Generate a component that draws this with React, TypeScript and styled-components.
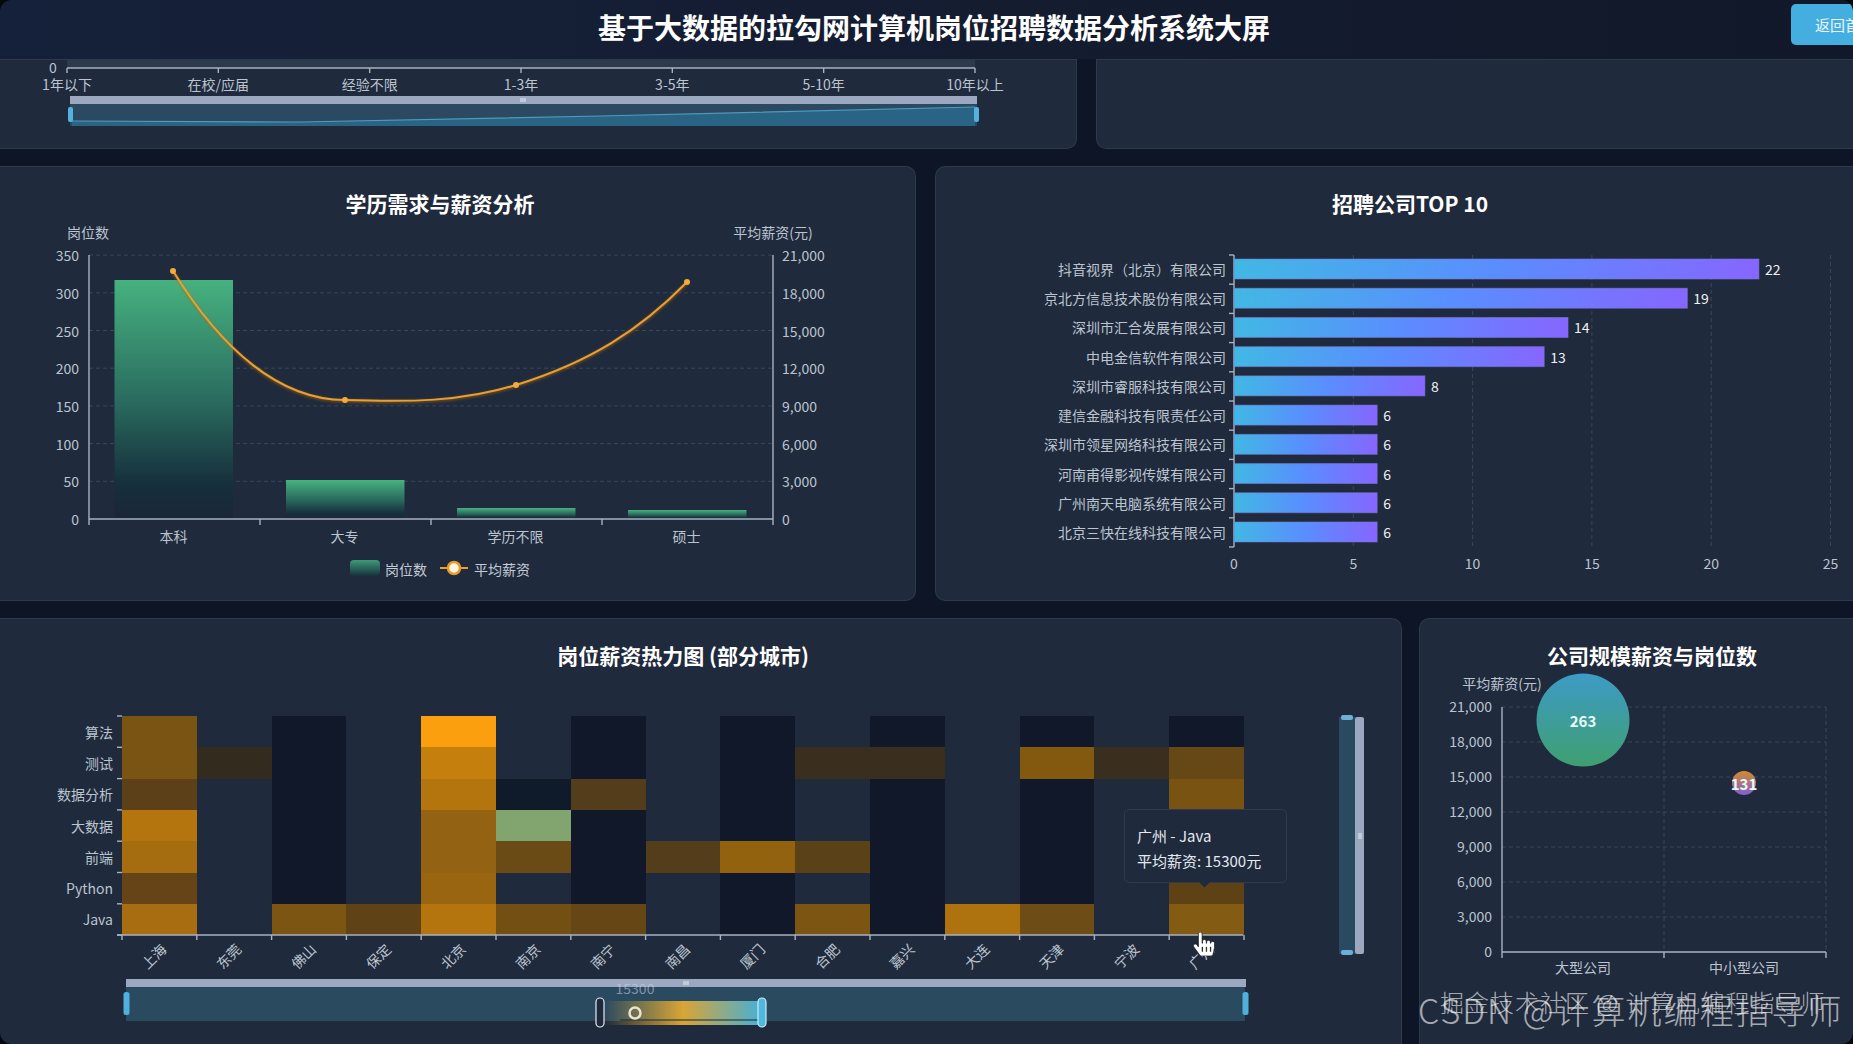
import React from "react";
import styled, {createGlobalStyle} from "styled-components";
import {FaHandPointer} from "react-icons/fa";

const FONT = `"Noto Sans CJK SC", "Noto Sans", "Liberation Sans", sans-serif`;

const GlobalStyle = createGlobalStyle`
    html, body {
        margin: 0;
        height: 100%;
        overflow: hidden;
        background: #05080f;
    }
    #root {
        height: 100%;
    }
`;

const Screen = styled.div`
    position: relative;
    width: 1853px;
    height: 1044px;
    overflow: hidden;
    border-radius: 12px;
    background: #0d1526;
    font-family: ${FONT};
`;

const Header = styled.header`
    display: flex;
    align-items: flex-start;
    height: 59px;
    padding-left: 77px;
    box-sizing: border-box;
    background: linear-gradient(90deg, #15213a 0%, #141c30 55%, #111829 100%);
`;

const HeaderTitle = styled.h1`
    flex: 1;
    margin: 0;
    text-align: center;
    color: #fff;
    font-size: 28px;
    font-weight: 700;
    line-height: 54px;
`;

const BackButton = styled.button`
    flex-shrink: 0;
    width: 102px;
    height: 41px;
    margin: 4px -40px 0 0;
    padding: 0 0 0 24px;
    border: none;
    border-radius: 5px;
    text-align: left;
    background: #44aee0;
    color: #eaf6fc;
    font-family: ${FONT};
    font-size: 15px;
`;

const Row = styled.div<{ $columns: string; $gap: number }>`
    display: grid;
    grid-template-columns: ${props => props.$columns};
    gap: ${props => props.$gap}px;
    width: 1921px;
    margin: 0 0 17px -36px;
`;

const Panel = styled.section`
    position: relative;
    box-sizing: border-box;
    padding-top: 24px;
    border-radius: 10px;
    background: #1f2a3c;
    box-shadow: inset 0 0 0 1px rgba(255, 255, 255, 0.07);
`;

const ScrolledPanel = styled(Panel)`
    height: 90px;
    padding-top: 0;
    border-radius: 0 0 10px 10px;
`;

const BottomPanel = styled(Panel)`
    height: 440px;
`;

const PanelTitle = styled.h2`
    margin: 0;
    text-align: center;
    color: #fff;
    font-size: 21px;
    font-weight: 700;
    line-height: 26px;
`;

const Canvas = styled.svg`
    display: block;
`;

const Label = styled.text`
    fill: #bcc4d0;
    font-family: ${FONT};
    font-size: 14px;
    dominant-baseline: central;
`;

const ValueLabel = styled(Label)`
    fill: #eef1f5;
`;

const BubbleLabel = styled(Label)`
    fill: #eafaf6;
    font-size: 15px;
    font-weight: 700;
`;

const LegendLabel = styled(Label)`
    fill: #c4cbd6;
`;

const RangeValue = styled(Label)`
    fill: rgba(205, 212, 224, 0.55);
`;

const AxisLine = styled.line`
    stroke: #a9b2c2;
    stroke-width: 1.4;
`;

const GridLine = styled.line`
    stroke: #3a4759;
    stroke-width: 1;
    stroke-dasharray: 4 3;
`;

const Tooltip = styled.div`
    position: absolute;
    left: 1160px;
    top: 191px;
    box-sizing: border-box;
    width: 163px;
    height: 74px;
    padding: 13px 0 0 12px;
    border: 1px solid #2e3a4d;
    border-radius: 5px;
    background: #1f2a3c;
    color: #e6eaf0;
    font-size: 15px;
    line-height: 25px;
    white-space: nowrap;

    &::after {
        content: "";
        position: absolute;
        left: 76px;
        bottom: -4px;
        width: 7px;
        height: 7px;
        background: #1f2a3c;
        transform: rotate(45deg);
    }
`;

const Pointer = styled.span`
    position: absolute;
    left: 1228px;
    top: 314px;
    color: #fff;
    line-height: 0;

    svg {
        stroke: #1a1a1a;
        stroke-width: 16px;
    }
`;

const Watermark = styled.div<{ $size: number; $left: number; $top: number; $spacing: number }>`
    position: absolute;
    left: ${props => props.$left}px;
    top: ${props => props.$top}px;
    color: rgba(255, 255, 255, 0.62);
    font-size: ${props => props.$size}px;
    font-weight: 300;
    letter-spacing: ${props => props.$spacing}px;
    line-height: 1;
    white-space: nowrap;
`;

const experienceLabels = ["1年以下", "在校/应届", "经验不限", "1-3年", "3-5年", "5-10年", "10年以上"];

const ExperienceChart = () => (
    <Canvas width={1113} height={90} viewBox="-36 59 1113 90">
        <rect x={67} y={59} width={908} height={9} fill="#2d3a4c"/>
        <Label x={53} y={67} textAnchor="middle">0</Label>
        <AxisLine x1={67} x2={975} y1={68} y2={68}/>
        {experienceLabels.map((label, i) => {
            const x = 67 + i * 151.33;
            return <g key={label}>
                <AxisLine x1={x} x2={x} y1={68} y2={73}/>
                <Label x={x} y={84} textAnchor="middle">{label}</Label>
            </g>;
        })}
        <rect x={70} y={96} width={907} height={8} fill="#9ca8c0"/>
        <rect x={70} y={104} width={907} height={22} fill="#2b4a62"/>
        <path d="M72,121 L300,122 L600,116 L975,107 L975,126 L72,126 Z" fill="#2a6485"/>
        <path d="M72,121 L300,122 L600,116 L975,107" fill="none" stroke="#4e9bbd" strokeWidth={1.2}/>
        <path d="M521,98 V102 M523,98 V102 M525,98 V102" stroke="#e8ecf2" strokeWidth={1}/>
        <rect x={68} y={107} width={5} height={15} rx={2} fill="#55b2de"/>
        <rect x={974} y={107} width={5} height={15} rx={2} fill="#55b2de"/>
    </Canvas>
);

const educationBars = [
    {label: "本科", x: 114.5, top: 280},
    {label: "大专", x: 286, top: 480},
    {label: "学历不限", x: 457, top: 508},
    {label: "硕士", x: 628, top: 510},
];

const EducationChart = () => (
    <Canvas width={952} height={385} viewBox="-36 216 952 385">
        <defs>
            <linearGradient id="eduBar" x1="0" y1="0" x2="0" y2="1">
                <stop offset="0%" stopColor="#46b27f"/>
                <stop offset="50%" stopColor="#2a6c5f"/>
                <stop offset="85%" stopColor="#16303c"/>
                <stop offset="100%" stopColor="#1a2539"/>
            </linearGradient>
            <linearGradient id="eduSwatch" x1="0" y1="0" x2="0" y2="1">
                <stop offset="0%" stopColor="#3e9a78"/>
                <stop offset="100%" stopColor="#17313d"/>
            </linearGradient>
            <filter id="lineGlow" x="-5%" y="-5%" width="110%" height="110%">
                <feDropShadow dx="0" dy="1" stdDeviation="1.5" floodColor="#b5660f" floodOpacity="0.8"/>
            </filter>
        </defs>
        <Label x={88} y={232} textAnchor="middle">岗位数</Label>
        <Label x={773} y={232} textAnchor="middle">平均薪资(元)</Label>
        {[0, 1, 2, 3, 4, 5, 6, 7].map(i => {
            const y = 519 - i * 37.7;
            return <g key={i}>
                {i > 0 && <GridLine x1={89} x2={773} y1={y} y2={y}/>}
                <Label x={79} y={y} textAnchor="end">{i * 50}</Label>
                <Label x={782} y={y}>{(i * 3000).toLocaleString("en-US")}</Label>
            </g>;
        })}
        {educationBars.map(bar => (
            <rect key={bar.label} x={bar.x} y={bar.top} width={118.5} height={519 - bar.top} fill="url(#eduBar)"/>
        ))}
        <AxisLine x1={89} x2={89} y1={255} y2={525}/>
        <AxisLine x1={773} x2={773} y1={255} y2={525}/>
        <AxisLine x1={89} x2={773} y1={519} y2={519}/>
        {[260, 431, 602].map(x => <AxisLine key={x} x1={x} x2={x} y1={519} y2={525}/>)}
        {educationBars.map((bar, i) => (
            <Label key={bar.label} x={173.5 + i * 171} y={536} textAnchor="middle">{bar.label}</Label>
        ))}
        <path
            d="M173,271 C222,350 280,400 345,400 C410,402 460,402 516,385 C590,362 640,330 687,282"
            fill="none" stroke="#e8a030" strokeWidth={2} filter="url(#lineGlow)"/>
        {[[173, 271], [345, 400], [516, 385], [687, 282]].map(([x, y]) => (
            <circle key={x} cx={x} cy={y} r={3} fill="#f3ab3c"/>
        ))}
        <rect x={350} y={560} width={30} height={16} rx={4} fill="url(#eduSwatch)"/>
        <LegendLabel x={385} y={569}>岗位数</LegendLabel>
        <line x1={440} x2={468} y1={568} y2={568} stroke="#e8a030" strokeWidth={2}/>
        <circle cx={454} cy={568} r={6} fill="#fff6df" stroke="#ec9a2a" strokeWidth={2.5}/>
        <LegendLabel x={474} y={569}>平均薪资</LegendLabel>
    </Canvas>
);

const companies = [
    {name: "抖音视界（北京）有限公司", count: 22},
    {name: "京北方信息技术股份有限公司", count: 19},
    {name: "深圳市汇合发展有限公司", count: 14},
    {name: "中电金信软件有限公司", count: 13},
    {name: "深圳市睿服科技有限公司", count: 8},
    {name: "建信金融科技有限责任公司", count: 6},
    {name: "深圳市领星网络科技有限公司", count: 6},
    {name: "河南甫得影视传媒有限公司", count: 6},
    {name: "广州南天电脑系统有限公司", count: 6},
    {name: "北京三快在线科技有限公司", count: 6},
];

const CompanyChart = () => (
    <Canvas width={950} height={385} viewBox="935 216 950 385">
        <defs>
            <linearGradient id="companyBar" x1="0" y1="0" x2="1" y2="0">
                <stop offset="0%" stopColor="#41b8e4"/>
                <stop offset="50%" stopColor="#5a8dff"/>
                <stop offset="100%" stopColor="#8666ff"/>
            </linearGradient>
        </defs>
        {[0, 5, 10, 15, 20, 25].map(value => {
            const x = 1234 + value * 23.86;
            return <g key={value}>
                {value > 0 && <GridLine x1={x} x2={x} y1={255} y2={547}/>}
                <Label x={x} y={563} textAnchor="middle">{value}</Label>
            </g>;
        })}
        <AxisLine x1={1234} x2={1234} y1={255} y2={547}/>
        {Array.from({length: 11}, (_, i) => 255 + i * 29.2).map(y => (
            <AxisLine key={y} x1={1229} x2={1234} y1={y} y2={y}/>
        ))}
        {companies.map((company, i) => {
            const y = 259 + i * 29.22;
            const end = company.count * 23.86;
            return <g key={company.name}>
                <Label x={1226} y={y + 10} textAnchor="end">{company.name}</Label>
                <rect x={1234} y={y} width={end} height={20} fill="url(#companyBar)"
                      stroke="#7d78d8" strokeOpacity={0.55}/>
                <ValueLabel x={1234 + end + 6} y={y + 10}>{company.count}</ValueLabel>
            </g>;
        })}
    </Canvas>
);

const cities = ["上海", "东莞", "佛山", "保定", "北京", "南京", "南宁", "南昌", "厦门", "合肥", "嘉兴", "大连", "天津", "宁波", "广州"];
const roles = ["算法", "测试", "数据分析", "大数据", "前端", "Python", "Java"];

const D = "#111829";
const _ = "";
const heatCells = [
    ["#7a5413", _, D, _, "#fc9f0e", _, D, _, D, _, D, _, D, _, D],
    ["#7a5413", "#332c1e", D, _, "#c47f0d", _, D, _, D, "#3a2f1e", "#3a2f1e", _, "#835910", "#3a2f1e", "#664716"],
    ["#5c4017", _, D, _, "#b5750e", "#0f1a2b", "#533d1a", _, D, _, D, _, D, _, "#785312"],
    ["#b5750e", _, D, _, "#936212", "#82a56f", D, _, D, _, D, _, D, _, "#785312"],
    ["#a56c10", _, D, _, "#936212", "#6a4a15", D, "#533d1a", "#93620f", "#5b4118", D, _, D, _, "#785312"],
    ["#674417", _, D, _, "#9a6510", _, D, _, D, _, D, _, D, _, "#5e4115"],
    ["#a76d10", _, "#7c5513", "#5f4216", "#b5750e", "#744f13", "#664615", _, D, "#7c5513", D, "#ae720f", "#6e4c15", _, "#845b13"],
];

const CELL_W = 74.8;
const CELL_H = 31.3;

const SalaryHeatmap = () => (
    <Canvas width={1438} height={376} viewBox="-36 668 1438 376">
        <defs>
            <linearGradient id="rangeBar" x1="0" y1="0" x2="1" y2="0">
                <stop offset="0%" stopColor="#d8a535" stopOpacity={0}/>
                <stop offset="50%" stopColor="#d8a535"/>
                <stop offset="100%" stopColor="#45b0d8"/>
            </linearGradient>
        </defs>
        {heatCells.map((row, r) => row.map((color, c) => color && (
            <rect key={`${r}-${c}`} x={122 + c * CELL_W} y={716 + r * CELL_H} width={CELL_W} height={CELL_H}
                  fill={color} shapeRendering="crispEdges"/>
        )))}
        {roles.map((role, r) => (
            <Label key={role} x={113} y={716 + (r + 0.5) * CELL_H} textAnchor="end">{role}</Label>
        ))}
        {Array.from({length: 8}, (_v, r) => 716 + r * CELL_H).map(y => (
            <AxisLine key={y} x1={117} x2={122} y1={y} y2={y}/>
        ))}
        <AxisLine x1={117} x2={1243} y1={935} y2={935}/>
        {Array.from({length: 16}, (_v, c) => 122 + c * CELL_W).map(x => (
            <AxisLine key={x} x1={x} x2={x} y1={935} y2={940}/>
        ))}
        {cities.map((city, c) => {
            const x = 122 + (c + 0.5) * CELL_W + 4;
            return <Label key={city} x={x} y={946} textAnchor="end" transform={`rotate(-45 ${x} 946)`}>{city}</Label>;
        })}

        <rect x={126} y={979} width={1120} height={8} fill="#9ca8c0"/>
        <rect x={126} y={987} width={1119} height={34} fill="#2a4a60"/>
        <path d="M684,981 V985 M686,981 V985 M688,981 V985" stroke="#e8ecf2"/>
        <rect x={123.5} y={992} width={6} height={23} rx={2.5} fill="#4fb0de"/>
        <rect x={1242.5} y={992} width={6} height={23} rx={2.5} fill="#4fb0de"/>
        <RangeValue x={635} y={988} textAnchor="middle">15300</RangeValue>
        <rect x={604} y={1001} width={158} height={24} fill="url(#rangeBar)"/>
        <line x1={620} x2={762} y1={1020} y2={1020} stroke="#162334" strokeWidth={1}/>
        <rect x={596} y={998} width={8} height={29} rx={4} fill="#1f2a3c" stroke="#e8ecf2" strokeWidth={1.2}/>
        <rect x={758} y={998} width={8} height={29} rx={4} fill="#4fb8e0" stroke="#cfeaf5" strokeWidth={1.2}/>
        <circle cx={635} cy={1013} r={5.5} fill="none" stroke="#e8e4cf" strokeWidth={2.5}/>

        <rect x={1339} y={717} width={16} height={237} fill="#2a4a60"/>
        <rect x={1355} y={717} width={9} height={237} rx={2} fill="#9ca8c0"/>
        <rect x={1341} y={715} width={12} height={5} rx={2} fill="#6ab0d8"/>
        <rect x={1341} y={950} width={12} height={5} rx={2} fill="#6ab0d8"/>
        <path d="M1358,834 H1362 M1358,836 H1362 M1358,838 H1362" stroke="#e8ecf2"/>
    </Canvas>
);

const CompanySizeChart = () => (
    <Canvas width={466} height={376} viewBox="1419 668 466 376">
        <defs>
            <linearGradient id="bubbleLarge" x1="0" y1="0" x2="0" y2="1">
                <stop offset="0%" stopColor="#3d9bc6"/>
                <stop offset="100%" stopColor="#3f9f70"/>
            </linearGradient>
            <linearGradient id="bubbleSmall" x1="0" y1="0" x2="0" y2="1">
                <stop offset="0%" stopColor="#d48a28"/>
                <stop offset="100%" stopColor="#7f5fd6"/>
            </linearGradient>
        </defs>
        <Label x={1502} y={683} textAnchor="middle">平均薪资(元)</Label>
        {[0, 1, 2, 3, 4, 5, 6, 7].map(i => {
            const y = 952 - i * 35;
            return <g key={i}>
                {i > 0 && <GridLine x1={1502} x2={1826} y1={y} y2={y}/>}
                <Label x={1492} y={y - 1} textAnchor="end">{(i * 3000).toLocaleString("en-US")}</Label>
            </g>;
        })}
        <GridLine x1={1664} x2={1664} y1={707} y2={952}/>
        <GridLine x1={1826} x2={1826} y1={707} y2={952}/>
        <AxisLine x1={1502} x2={1502} y1={707} y2={958}/>
        <AxisLine x1={1502} x2={1826} y1={952} y2={952}/>
        <AxisLine x1={1664} x2={1664} y1={952} y2={958}/>
        <AxisLine x1={1826} x2={1826} y1={952} y2={958}/>
        <Label x={1583} y={967} textAnchor="middle">大型公司</Label>
        <Label x={1744} y={967} textAnchor="middle">中小型公司</Label>
        <circle cx={1583} cy={720} r={46.5} fill="url(#bubbleLarge)"/>
        <BubbleLabel x={1583} y={720} textAnchor="middle">263</BubbleLabel>
        <circle cx={1744} cy={783} r={12} fill="url(#bubbleSmall)"/>
        <BubbleLabel x={1744} y={783} textAnchor="middle">131</BubbleLabel>
    </Canvas>
);

export default function App() {
    return <>
        <GlobalStyle/>
        <Screen>
            <Header>
                <HeaderTitle>基于大数据的拉勾网计算机岗位招聘数据分析系统大屏</HeaderTitle>
                <BackButton>返回首页</BackButton>
            </Header>
            <Row $columns="1113px 789px" $gap={19}>
                <ScrolledPanel><ExperienceChart/></ScrolledPanel>
                <ScrolledPanel/>
            </Row>
            <Row $columns="952px 950px" $gap={19}>
                <Panel>
                    <PanelTitle>学历需求与薪资分析</PanelTitle>
                    <EducationChart/>
                </Panel>
                <Panel>
                    <PanelTitle>招聘公司TOP 10</PanelTitle>
                    <CompanyChart/>
                </Panel>
            </Row>
            <Row $columns="1438px 466px" $gap={17}>
                <BottomPanel>
                    <PanelTitle>岗位薪资热力图 (部分城市)</PanelTitle>
                    <SalaryHeatmap/>
                    <Tooltip>
                        广州 - Java<br/>
                        平均薪资: 15300元
                    </Tooltip>
                    <Pointer><FaHandPointer size={24}/></Pointer>
                </BottomPanel>
                <BottomPanel>
                    <PanelTitle>公司规模薪资与岗位数</PanelTitle>
                    <CompanySizeChart/>
                </BottomPanel>
            </Row>
            <Watermark $size={24} $left={1440} $top={990} $spacing={1}>掘金技术社区 @ 计算机编程指导师</Watermark>
            <Watermark $size={34} $left={1418} $top={993} $spacing={2}>CSDN @计算机编程指导师</Watermark>
        </Screen>
    </>;
}
